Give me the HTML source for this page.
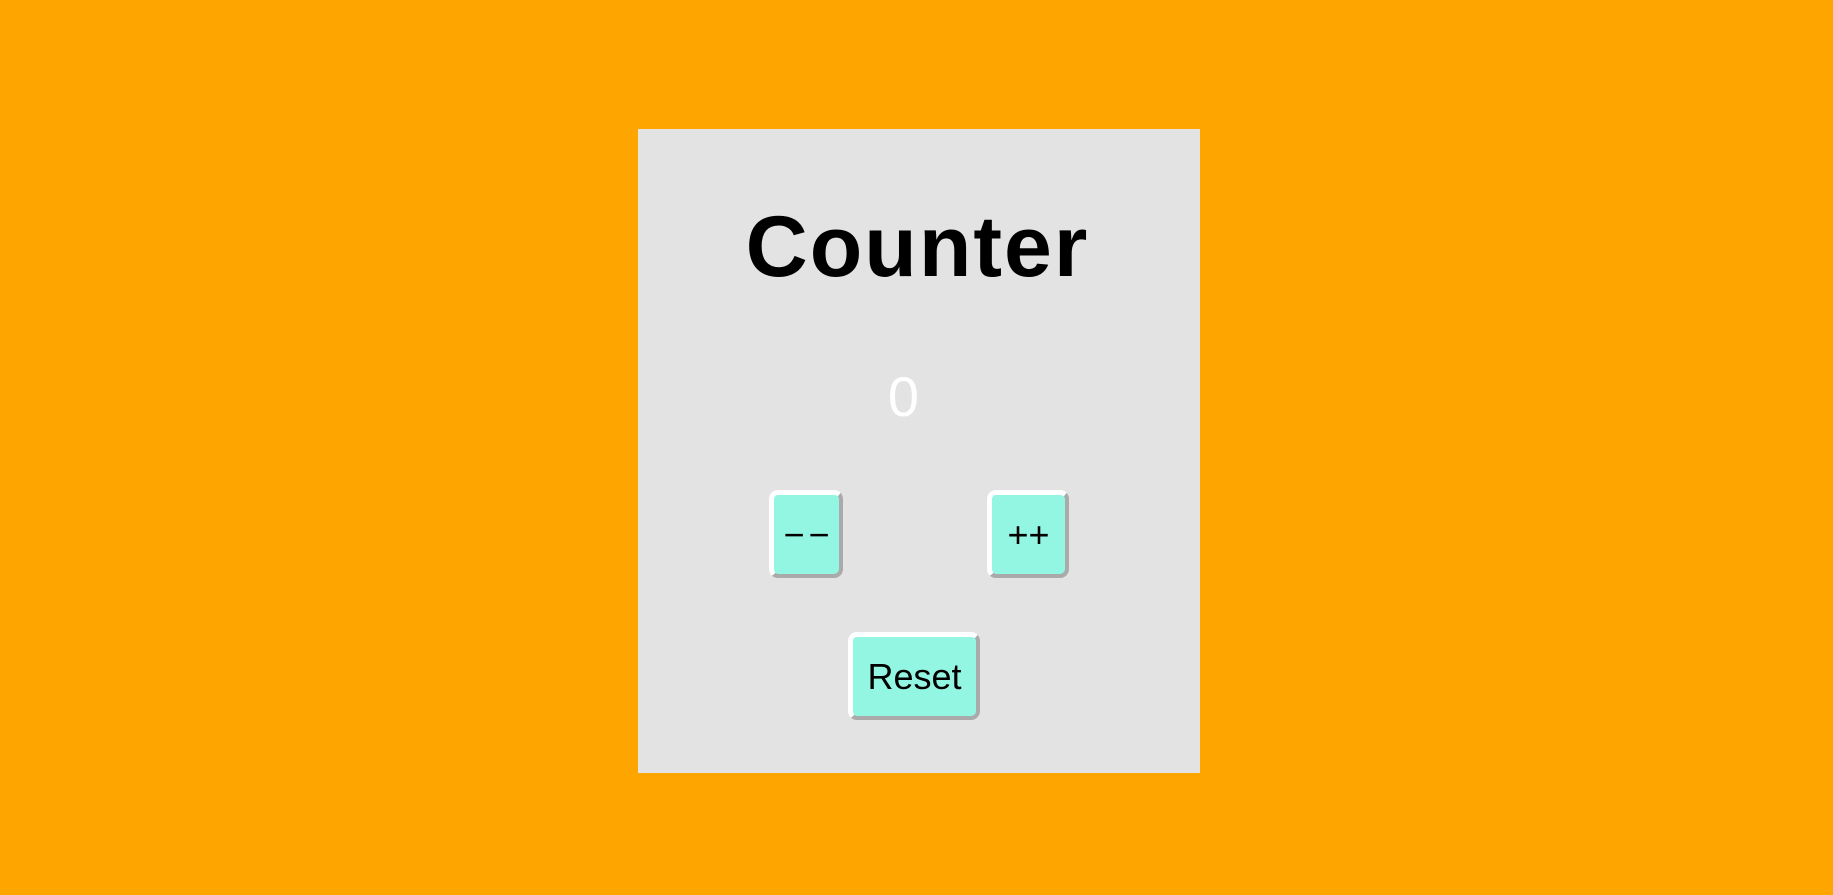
<!DOCTYPE html>
<html><head><style>
html,body{margin:0;padding:0;width:1833px;height:895px;background:#ffa500;overflow:hidden;font-family:"Liberation Sans",sans-serif;}
.card{position:absolute;left:638px;top:129px;width:562px;height:644px;background:#e3e3e3;}
h1{position:absolute;left:0;width:100%;top:197px;margin:0;text-align:center;font-size:86px;font-weight:bold;line-height:100px;color:#000;letter-spacing:2px;padding-left:2px;box-sizing:border-box}
.num{position:absolute;left:0;width:100%;top:365px;text-align:center;font-size:56px;line-height:64px;color:#fff;padding-right:26px;box-sizing:border-box}
.btn{position:absolute;box-sizing:border-box;background:#93f6e3;border-style:solid;border-width:5px 4px 4px 5px;border-color:#fff #aaa #aaa #fff;border-radius:9px;display:flex;align-items:center;justify-content:center;color:#000;font-size:36px;}
</style></head><body>
<div class="card"></div>
<h1>Counter</h1>
<div class="num">0</div>
<div class="btn" style="left:769px;top:490px;width:74px;height:88px;letter-spacing:4px;padding-left:4px">−−</div>
<div class="btn" style="left:987px;top:490px;width:82px;height:88px">++</div>
<div class="btn" style="left:848px;top:632px;width:132px;height:88px">Reset</div>
</body></html>
